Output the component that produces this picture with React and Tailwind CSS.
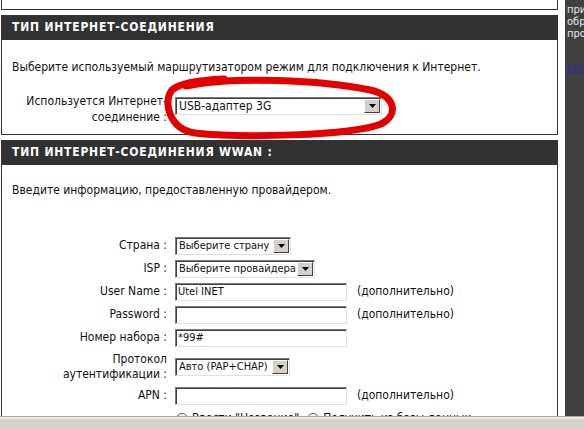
import React from "react";

const FONT = {
  fontFamily: '"DejaVu Sans Condensed", "DejaVu Sans", sans-serif',
};

function Arrow() {
  return (
    <div className="w-[16px] h-full bg-[#d4d0c8] border-t border-l border-t-white border-l-white border-b border-r border-b-[#404040] border-r-[#404040] flex items-center justify-center shrink-0">
      <svg width="7" height="4" viewBox="0 0 7 4">
        <path d="M0 0 L7 0 L3.5 4 Z" fill="#000" />
      </svg>
    </div>
  );
}

function Select({ w, text, size = "text-[11px]" }) {
  return (
    <div
      className={`${w} h-[18px] bg-white border-t border-l border-t-[#7a7a7a] border-l-[#7a7a7a] border-b border-r border-b-[#e0e0e0] border-r-[#e0e0e0] flex items-stretch shadow-[inset_1px_1px_0_#404040]`}
    >
      <div className={`flex-1 pl-[3px] ${size} leading-[16px] text-[#111] whitespace-nowrap overflow-hidden`}>
        {text}
      </div>
      <div className="p-px">
        <Arrow />
      </div>
    </div>
  );
}

function Input({ value }) {
  return (
    <div className="w-[172px] h-[18px] bg-white border-t border-l border-t-[#7a7a7a] border-l-[#7a7a7a] border-b border-r border-b-[#e0e0e0] border-r-[#e0e0e0] shadow-[inset_1px_1px_0_#404040] pl-[2px] text-[11px] leading-[16px] text-[#111] whitespace-nowrap overflow-hidden">
      {value}
    </div>
  );
}

function Row({ label, children, h = "h-[23px]", extra }) {
  return (
    <div className={`flex items-center ${h}`}>
      <div className="w-[165px] text-right text-[12px] leading-[15px] text-[#111]">
        {label}
      </div>
      <div className="ml-[8px]">{children}</div>
      {extra && (
        <div className="ml-[10px] text-[12px] leading-[15px] text-[#111]">
          {extra}
        </div>
      )}
    </div>
  );
}

function Header({ children }) {
  return (
    <div className="h-[25px] bg-[#323232] pl-[11px] text-white font-bold text-[12px] leading-[25px] tracking-[0.8px] whitespace-nowrap">
      {children}
    </div>
  );
}

export default function App() {
  return (
    <div
      className="relative w-[584px] h-[429px] overflow-hidden bg-white flex flex-col"
      style={FONT}
    >
      <div className="flex h-[416px] overflow-hidden shrink-0">
        <div className="ml-px w-[557px] shrink-0">
          <div className="h-[10px] border-x border-b border-[#333]" />

          <div className="mt-[5px]">
            <Header>ТИП ИНТЕРНЕТ-СОЕДИНЕНИЯ</Header>
            <div className="h-[95px] border-x border-b border-[#333] pt-[20px]">
              <div className="pl-[10px] text-[12px] leading-[14px] text-[#111] whitespace-nowrap">
                Выберите используемый маршрутизатором режим для подключения к
                Интернет.
              </div>
              <div className="flex items-start mt-[19px]">
                <div className="w-[165px] text-right text-[12px] leading-[16px] text-[#111]">
                  Используется Интернет-
                  <br />
                  соединение :
                </div>
                <div className="ml-[8px] mt-[4px]">
                  <Select w="w-[207px]" size="text-[12px]" text="USB-адаптер 3G" />
                </div>
              </div>
            </div>
          </div>

          <div className="mt-[5px]">
            <Header>ТИП ИНТЕРНЕТ-СОЕДИНЕНИЯ WWAN :</Header>
            <div className="border-x border-[#333] pt-[18px] pb-[20px]">
              <div className="pl-[10px] text-[12px] leading-[14px] text-[#111] whitespace-nowrap">
                Введите информацию, предоставленную провайдером.
              </div>
              <div className="mt-[37px]">
                <Row label="Страна :">
                  <Select w="w-[116px]" text="Выберите страну" />
                </Row>
                <Row label="ISP :">
                  <Select w="w-[140px]" text="Выберите провайдера" />
                </Row>
                <Row label="User Name :" extra="(дополнительно)">
                  <Input value="Utel INET" />
                </Row>
                <Row label="Password :" extra="(дополнительно)">
                  <Input value="" />
                </Row>
                <Row label="Номер набора :">
                  <Input value="*99#" />
                </Row>
                <Row
                  h="h-[35px]"
                  label={
                    <>
                      Протокол
                      <br />
                      аутентификации :
                    </>
                  }
                >
                  <Select w="w-[115px]" text="Авто (PAP+CHAP)" />
                </Row>
                <Row label="APN :" extra="(дополнительно)">
                  <Input value="" />
                </Row>
                <div className="flex items-center h-[23px] pl-[174px] text-[12px] leading-[15px] text-[#111] whitespace-nowrap">
                  <span className="inline-block w-[12px] h-[12px] rounded-full border border-[#555] bg-white mr-[4px]" />
                  Ввести "Название"
                  <span className="inline-block w-[12px] h-[12px] rounded-full border border-[#555] bg-white ml-[8px] mr-[4px]" />
                  Получить из базы данных
                </div>
              </div>
            </div>
          </div>
        </div>

        <div className="w-[7px] shrink-0" />

        <div className="w-[19px] shrink-0 bg-[#3f413f] overflow-hidden pl-[2px] pt-[4px] text-[11px] leading-[12px] text-[#e6e6e6] whitespace-nowrap">
          <div>приложение</div>
          <div>обратитесь</div>
          <div>провайдеру</div>
          <div className="mt-[22px] text-[#2a2ab0] underline">Больше</div>
        </div>
      </div>

      <div className="h-[13px] shrink-0 border-t border-[#a8a8a8] bg-[#d6d3cc] shadow-[inset_0_2px_0_#ecebe6]" />

      <svg
        className="absolute left-0 top-0 pointer-events-none"
        width="584"
        height="429"
        viewBox="0 0 584 429"
      >
        <path
          d="M 186 86 C 232 76, 322 80, 370 90 C 396 96, 399 115, 381 124 C 350 136, 240 138, 195 133 C 168 129, 163 100, 172 90 C 180 83, 200 80, 224 79"
          fill="none"
          stroke="#e50000"
          strokeWidth="7"
          strokeLinecap="round"
          strokeLinejoin="round"
        />
      </svg>
    </div>
  );
}
